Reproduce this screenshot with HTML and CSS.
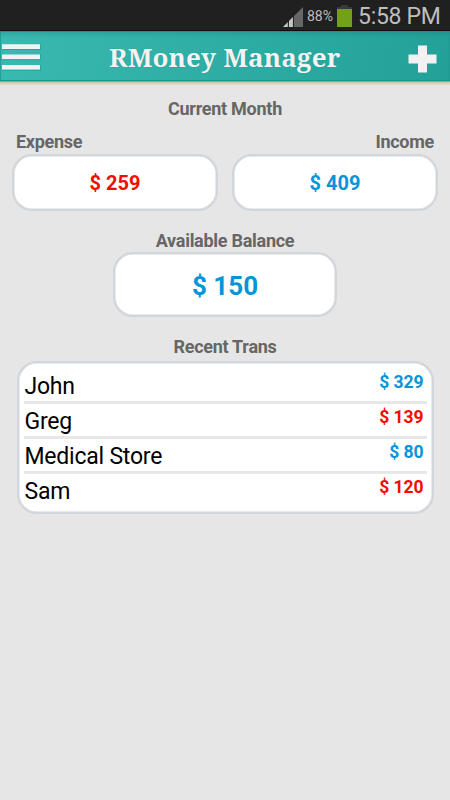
FILE: index.html
```html
<!DOCTYPE html>
<html lang="en">
<head>
<meta charset="utf-8">
<title>RMoney Manager</title>
<link rel="stylesheet" href="styles.css">
</head>
<body>
<div class="status">
  <svg class="signal" width="20" height="20" viewBox="0 0 20 20"><path d="M0 20L20 0V20Z" fill="#666"/><path d="M0 20L5 15V20ZM6 20V14L10 10V20Z" fill="#c8c8c8"/><path d="M5.3 20V14M10.4 20V9" stroke="#202020"/></svg>
  <span class="percent">88%</span>
  <svg class="battery" width="15" height="22" viewBox="0 0 15 22"><path d="M4 0H11V2H15V4H0V2H4Z" fill="#3a3a3a"/><path d="M0 4H15V22H0Z" fill="#73a01b"/></svg>
  <span class="clock">5:58 PM</span>
</div>
<header class="bar">
  <svg class="menu" width="41" height="28" viewBox="0 0 41 28"><path d="M2 1.300H40V6H2ZM2 11.500H40V16.200H2ZM2 22H40V26.700H2Z" fill="#f1f3f3"/><path d="M2 6.500H40.500V1M2 16.700H40.500V11M2 27.200H40.500V22" fill="none" stroke="#13a79c" stroke-width=".8"/></svg>
  <h1 class="title">RMoney Manager</h1>
  <svg class="plus" width="29" height="28" viewBox="0 0 29 28"><path d="M10 .5H19V9.500H28.500V18.500H19V27.500H10V18.500H.5V9.500H10Z" fill="#f2f2f2"/></svg>
</header>
<main>
  <h2 class="label month">Current Month</h2>
  <div class="totals">
    <section><h3 class="label expense-label">Expense</h3><div class="box expense">$ 259</div></section>
    <section><h3 class="label income-label">Income</h3><div class="box income">$ 409</div></section>
  </div>
  <h2 class="label balance-label">Available Balance</h2>
  <div class="box balance income">$ 150</div>
  <h2 class="label recent-label">Recent Trans</h2>
  <ul class="list">
    <li><span class="name">John</span><span class="amount income">$ 329</span></li>
    <li><span class="name">Greg</span><span class="amount expense">$ 139</span></li>
    <li><span class="name">Medical Store</span><span class="amount income">$ 80</span></li>
    <li><span class="name">Sam</span><span class="amount expense">$ 120</span></li>
  </ul>
</main>
</body>
</html>
```
FILE: styles.css
```css
* { box-sizing: border-box; }
body { margin: 0; width: 450px; height: 800px; overflow: hidden; background: #e6e6e6; font-family: Roboto, "Liberation Sans", sans-serif; }
h1, h2, h3, ul { margin: 0; padding: 0; }
svg { display: block; flex: none; }
.status { height: 31px; display: flex; background: #202020; border-bottom: 1px solid #180c0c; color: #bebebe; white-space: nowrap; }
.signal { margin: 7px 0 0 283px; }
.percent { width: 30px; margin-left: 4px; font-size: 14px; line-height: 32px; }
.battery { margin-top: 5px; }
.clock { margin-left: 6px; font-size: 23px; line-height: 34px; letter-spacing: -.3px; }
.bar { height: 50px; display: flex; background: linear-gradient(100deg, #3ab9b0, #23a198); border-top: 1px solid #218e87; border-bottom: 1px solid #109b92; box-shadow: inset 0 3px 3px rgba(0, 90, 85, .15), inset 1px 0 #23a69c, 0 1px 1px #aaa195, 0 2px 2px #cbc6af, 0 4px 1px #e0dcc4; }
.menu { margin-top: 11px; }
.title { width: 233px; margin-left: 68px; color: #f3f3f3; font: bold 26px/50px "Droid Serif", "Noto Serif", "DejaVu Serif Condensed", "DejaVu Serif", serif; letter-spacing: .13px; white-space: nowrap; text-shadow: 0 0 1px #178e86; }
.plus { margin: 13px 0 0 66px; }
main { display: flex; flex-direction: column; align-items: center; }
.label { color: #666; font-size: 18px; font-weight: 700; line-height: 22px; letter-spacing: -.27px; white-space: nowrap; }
.month { margin-top: 17px; }
.totals { width: 426px; margin-top: 11px; display: grid; grid-template-columns: 1fr 1fr; gap: 14px; }
.expense-label { margin-left: 4px; }
.income-label { margin-right: 4px; text-align: right; }
.box { height: 57px; margin-top: 1px; border: 2px solid #d2d5da; border-radius: 20px; background: #fff; display: flex; align-items: center; justify-content: center; font-size: 20px; font-weight: 700; box-shadow: inset 0 0 0 .5px #d2d5da; }
.expense { color: #f50b00; }
.income { color: #0894d8; }
.label.income-label { color: #666; }
.balance-label { margin-top: 19px; }
.balance { width: 224px; height: 65px; margin-top: 0; padding-top: 2px; font-size: 26px; }
.recent-label { margin-top: 18px; padding-top: 1px; height: 22px; }
.list { width: 417px; height: 153px; margin-top: 4px; padding: 4px 5px 0; border: 2px solid #d2d5da; border-radius: 20px; background: #fff; list-style: none; box-shadow: inset 0 0 0 .5px #d2d5da; }
.list li { height: 35px; display: flex; justify-content: space-between; border-bottom: 3px solid #e8e8e8; }
.list li:first-child { height: 37px; }
.list li:last-child { border-bottom: 0; }
.name { margin-left: 1px; color: #000; font-size: 23px; line-height: 35px; letter-spacing: -.22px; }
.list li:first-child .name { line-height: 39px; }
.amount { margin-right: 3px; font-size: 17.500px; font-weight: 700; line-height: 26px; letter-spacing: -.05px; }
.list li:first-child .amount { line-height: 30px; }
```
